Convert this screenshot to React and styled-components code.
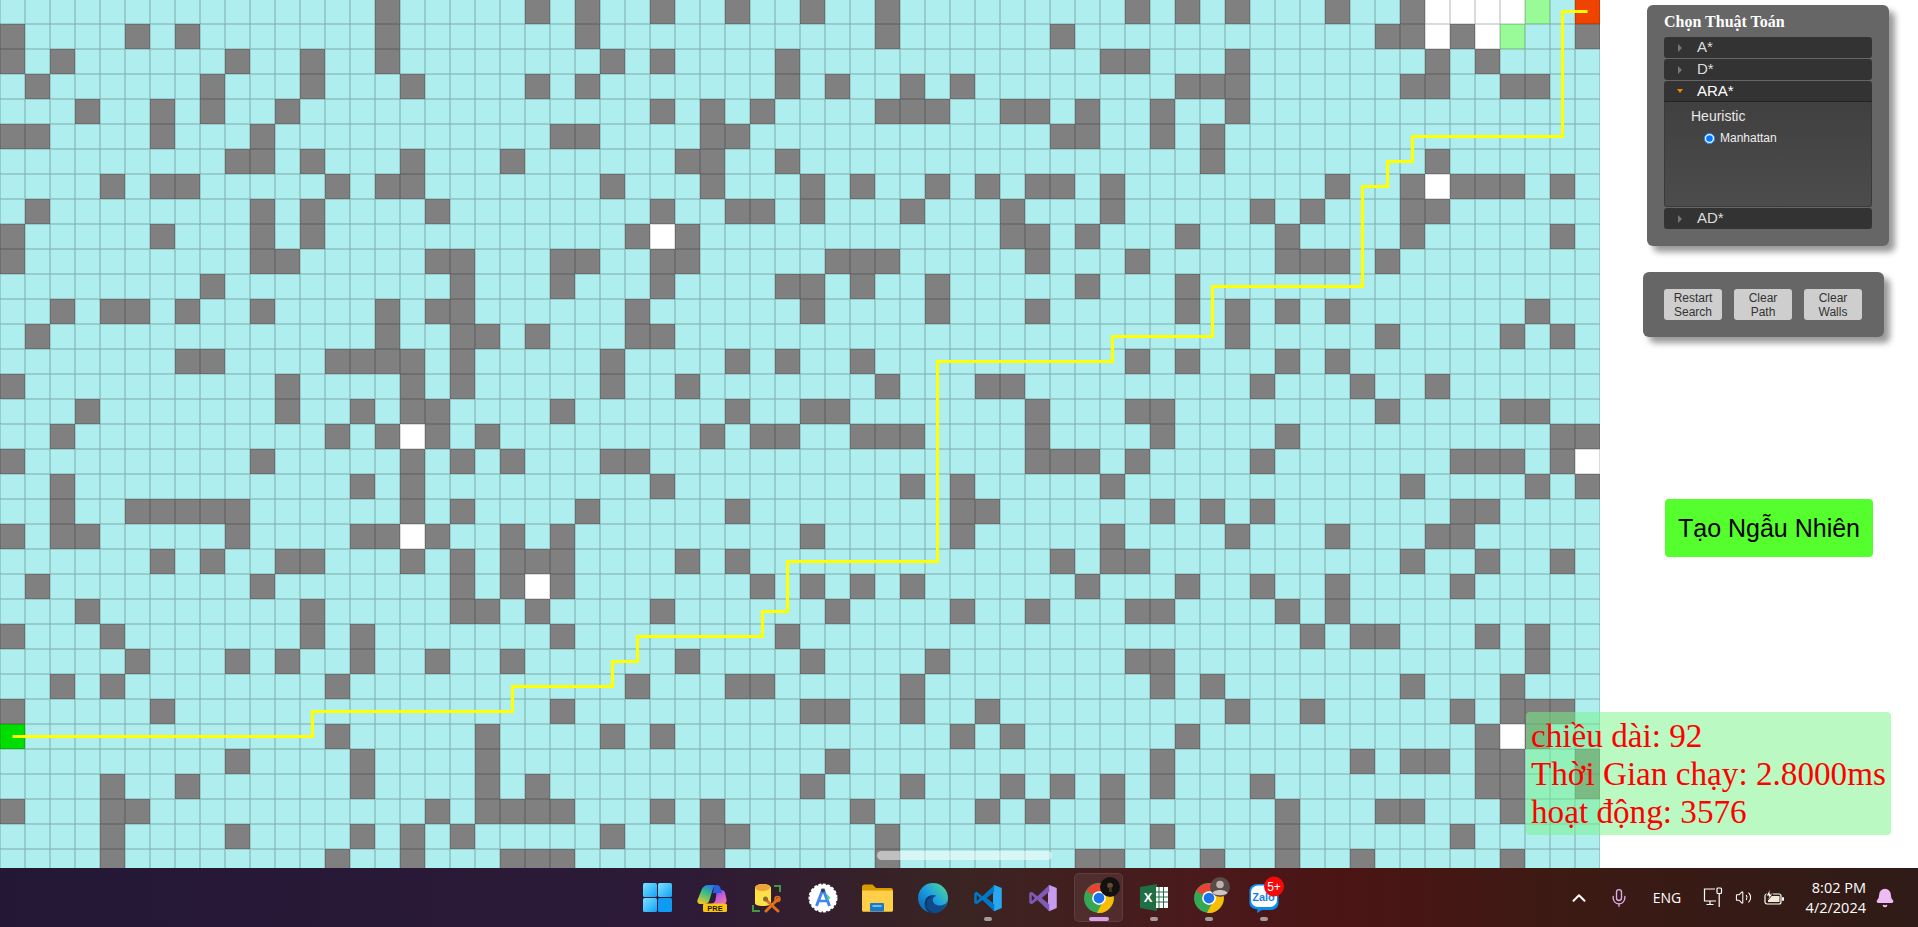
import React from 'react';
import styled, { createGlobalStyle } from 'styled-components';
import { ChevronUp, Mic, Volume2, Bell } from 'lucide-react';

const GlobalStyle = createGlobalStyle`
  html, body {
    margin: 0;
    padding: 0;
    background: #fff;
    overflow: hidden;
  }
`;

// wall columns per row, read off the screenshot
const WALLS = [
  [15,21,23,26,29,32,35,45,47,49,53,56],
  [0,5,7,15,23,35,42,55,56,58,63],
  [0,2,9,12,15,24,26,31,44,45,49,57,59],
  [1,8,12,16,21,23,31,33,36,38,47,48,49,56,57,60,61],
  [3,6,8,11,26,28,30,35,36,37,40,41,43,46,49],
  [0,1,6,10,22,23,28,29,42,43,46,48],
  [9,10,12,16,20,27,28,31,48,57],
  [4,6,7,13,15,16,24,28,32,34,37,39,41,42,44,53,56,58,59,60,62],
  [1,10,12,17,26,29,30,32,36,40,44,50,52,56,57],
  [0,6,10,12,25,27,40,41,43,47,51,56,62],
  [0,10,11,17,18,22,23,26,27,33,34,35,41,45,51,52,53,55],
  [8,18,22,26,31,32,34,37,43,47],
  [2,4,5,7,10,15,17,18,25,32,37,41,47,49,51,53,61],
  [1,15,18,19,21,25,26,49,55,60,62],
  [7,8,13,14,15,16,18,24,29,31,34,45,47,51,53],
  [0,11,16,18,24,27,35,39,40,50,54,57],
  [3,11,14,16,17,22,29,32,33,41,45,46,55,60,61],
  [2,13,15,17,19,28,30,31,34,35,36,41,46,51,62,63],
  [0,10,16,18,20,24,25,41,42,43,45,50,58,59,60,62],
  [2,14,16,26,36,38,44,56,61,63],
  [2,5,6,7,8,9,16,18,23,29,38,39,46,48,50,58,59],
  [0,2,3,9,14,15,17,20,22,32,38,44,49,53,57,58],
  [6,8,11,12,16,18,20,21,22,27,29,42,44,45,56,59,62],
  [1,10,18,20,22,30,32,34,36,43,47,50,53,58],
  [3,12,18,19,21,26,33,38,41,45,46,51,53],
  [0,4,12,14,22,31,52,54,55,59,61],
  [5,9,11,14,17,20,27,32,37,45,46,61],
  [2,4,13,25,29,30,36,46,48,56,60],
  [0,6,22,32,33,36,39,49,52,58,60,61,62],
  [13,19,24,26,38,40,47,59,61],
  [9,14,19,33,46,54,56,57,59,60,63],
  [4,7,14,19,21,32,36,40,42,44,46,50,59,60,63],
  [0,4,5,17,19,20,21,22,26,28,34,39,41,44,51,55,56,60],
  [4,9,14,16,18,24,28,29,35,46,51,58],
  [4,13,16,20,21,22,28,35,43,44,48,51,54,60],
];

const SPECIAL = {
  '0:57': 'open', '0:58': 'open', '0:59': 'open', '0:60': 'open',
  '1:57': 'open', '1:59': 'open',
  '7:57': 'open', '9:26': 'open', '17:16': 'open', '18:63': 'open',
  '21:16': 'open', '23:21': 'open', '29:60': 'open',
  '0:61': 'frontier', '1:60': 'frontier',
  '29:0': 'start', '0:63': 'end',
};

const COLS = 64;
const CELL = 25;

const CELL_COLORS = {
  closed: '#afeeee',
  wall: '#808080',
  open: '#ffffff',
  frontier: '#98fb98',
  start: '#00dd00',
  end: '#ee4400',
};

// [col, row] corners of the found path
const PATH = [
  [0,29],[12,29],[12,28],[20,28],[20,27],[24,27],[24,26],[25,26],[25,25],[30,25],[30,24],
  [31,24],[31,22],[37,22],[37,14],[44,14],[44,13],[48,13],[48,11],[54,11],[54,7],[55,7],
  [55,6],[56,6],[56,5],[62,5],[62,0],[63,0],
];

const pathPoints = PATH.map(([c, r]) => `${c * CELL + 12.5},${r * CELL + 12.5}`).join(' ');

const cellKind = (row, col) => {
  const special = SPECIAL[`${row}:${col}`];
  if (special) return special;
  return WALLS[row].includes(col) ? 'wall' : 'closed';
};

const Page = styled.div`
  position: relative;
  width: 1918px;
  height: 927px;
  display: flex;
  flex-direction: column;
  overflow: hidden;
  font-family: "Liberation Sans", Arial, sans-serif;
`;

const Main = styled.div`
  display: flex;
  height: 868px;
  overflow: hidden;
`;

const BoardFrame = styled.div`
  width: 1600px;
  flex: none;
  overflow: hidden;
`;

const Board = styled.div`
  position: relative;
  margin-top: -1px;
  display: grid;
  grid-template-columns: repeat(${COLS}, ${CELL}px);
  grid-auto-rows: ${CELL}px;
`;

const Cell = styled.div`
  background: ${(p) => CELL_COLORS[p.$kind]};
  box-shadow: inset 1px 1px 0 rgba(0, 0, 0, 0.14), inset -1px -1px 0 rgba(0, 0, 0, 0.14);
`;

const PathLine = styled.svg`
  position: absolute;
  left: 0;
  top: 0;
  width: 1600px;
  height: 875px;
  pointer-events: none;
`;

const Side = styled.aside`
  flex: 1;
  display: flex;
  flex-direction: column;
  align-items: flex-start;
`;

const AlgoPanel = styled.section`
  width: 242px;
  height: 241px;
  margin: 5px 0 0 47px;
  padding: 7px 17px 0;
  box-sizing: border-box;
  background: #666;
  border-radius: 6px;
  box-shadow: 6px 6px 6px rgba(0, 0, 0, 0.4);
`;

const PanelTitle = styled.h3`
  margin: 0;
  height: 25px;
  font-family: "Liberation Serif", "Times New Roman", serif;
  font-size: 16px;
  line-height: 20px;
  font-weight: bold;
  color: #fff;
`;

const Accordion = styled.div`
  display: flex;
  flex-direction: column;
  gap: 1px;
`;

const AlgoHeader = styled.div`
  height: 21px;
  box-sizing: border-box;
  display: flex;
  align-items: center;
  background: #333;
  border-radius: ${(p) => (p.$active ? '3px 3px 0 0' : '3px')};
  border-bottom: ${(p) => (p.$active ? '1px solid #222' : 'none')};
  font-size: 15px;
  color: ${(p) => (p.$active ? '#fff' : '#ddd')};
`;

const HeaderText = styled.span`
  padding-bottom: 2px;
`;

const ArrowSlot = styled.span`
  width: 33px;
  padding-left: 13px;
  box-sizing: border-box;
  display: flex;
  align-items: center;
`;

const ArrowRight = styled.span`
  width: 0;
  height: 0;
  margin-left: 1px;
  border-style: solid;
  border-width: 4px 0 4px 4px;
  border-color: transparent transparent transparent #777;
`;

const ArrowDown = styled.span`
  width: 0;
  height: 0;
  border-style: solid;
  border-width: 4px 3.5px 0;
  border-color: #f58400 transparent transparent;
`;

const AlgoBody = styled.div`
  height: 105px;
  margin-top: -1px;
  padding: 4px 0 0 26px;
  box-sizing: border-box;
  background: linear-gradient(180deg, #404040, #4c4c4c);
  border: 1px solid #3a3a3a;
  border-top: none;
  border-radius: 0 0 3px 3px;
`;

const BodyLabel = styled.div`
  font-size: 14px;
  line-height: 20px;
  color: #e8e8e8;
`;

const RadioRow = styled.label`
  display: flex;
  align-items: center;
  gap: 5px;
  margin: 5px 0 0 13px;
  font-size: 12px;
  line-height: 14px;
  color: #eee;
`;

const Radio = styled.input`
  width: 11px;
  height: 11px;
  margin: 0;
`;

const ButtonPanel = styled.section`
  width: 241px;
  height: 65px;
  margin: 26px 0 0 43px;
  padding: 17px 0 0 21px;
  box-sizing: border-box;
  display: flex;
  gap: 12px;
  background: #666;
  border-radius: 6px;
  box-shadow: 6px 6px 6px rgba(0, 0, 0, 0.4);
`;

const SmallButton = styled.button`
  width: 58px;
  height: 31px;
  padding: 0;
  border: none;
  border-radius: 3px;
  background: #cecece;
  color: #333;
  font-family: inherit;
  font-size: 12px;
  line-height: 14px;
`;

const RandomButton = styled.button`
  width: 208px;
  height: 58px;
  margin: 162px 0 0 65px;
  padding: 0;
  border: none;
  border-radius: 4px;
  background: #55ff2d;
  color: #000;
  font-family: inherit;
  font-size: 25px;
`;

const Stats = styled.div`
  position: absolute;
  left: 1526px;
  top: 712px;
  padding: 5px 5px 4px;
  border-radius: 4px;
  background: rgba(117, 243, 133, 0.5);
  color: #ff0000;
  font-family: "Liberation Serif", "Times New Roman", serif;
  font-size: 33.2px;
  white-space: nowrap;
`;

const ScrollThumb = styled.div`
  position: absolute;
  left: 877px;
  top: 851px;
  width: 175px;
  height: 9px;
  border-radius: 5px;
  background: rgba(255, 255, 255, 0.5);
`;

const Taskbar = styled.footer`
  height: 59px;
  flex: none;
  display: flex;
  align-items: center;
  padding-left: 629.5px;
  background: linear-gradient(90deg, #241736 0%, #2c1a38 35%, #3a2422 50%, #4a1a1c 62%, #4b1414 70%, #3c1a14 82%, #2f1b17 100%);
`;

const Tile = styled.div`
  position: relative;
  width: 49px;
  height: 49px;
  margin: 0 3.1px;
  display: flex;
  align-items: center;
  justify-content: center;
  box-sizing: border-box;
  border-radius: 5px;
  background: ${(p) => (p.$active ? 'rgba(255, 255, 255, 0.07)' : 'transparent')};
  border: 1px solid ${(p) => (p.$active ? 'rgba(255, 255, 255, 0.08)' : 'transparent')};
`;

const RunDot = styled.span`
  position: absolute;
  left: 50%;
  bottom: 0;
  width: ${(p) => (p.$active ? '20px' : '8px')};
  height: 4px;
  transform: translateX(-50%);
  border-radius: 2px;
  background: ${(p) => (p.$active ? '#dca0e6' : '#a59a9a')};
`;

const Tray = styled.div`
  margin-left: auto;
  padding-right: 14px;
  display: flex;
  align-items: center;
  color: #fff;
  font-family: "Open Sans", "Noto Sans", sans-serif;
`;

const TrayItem = styled.div`
  width: ${(p) => p.$w}px;
  display: flex;
  justify-content: center;
  align-items: center;
  font-size: 14px;
`;

const Clock = styled.div`
  width: 73px;
  text-align: right;
  font-size: 14.5px;
  line-height: 20px;
`;

const WindowsIcon = () => (
  <svg width="29" height="29" viewBox="0 0 29 29">
    <defs>
      <linearGradient id="winA" x1="0" y1="0" x2="1" y2="1">
        <stop offset="0" stopColor="#7be4ff" />
        <stop offset="1" stopColor="#12a0f5" />
      </linearGradient>
    </defs>
    <rect x="0" y="0" width="14" height="14" rx="1.5" fill="url(#winA)" />
    <rect x="15" y="0" width="14" height="14" rx="1.5" fill="url(#winA)" />
    <rect x="0" y="15" width="14" height="14" rx="1.5" fill="url(#winA)" />
    <rect x="15" y="15" width="14" height="14" rx="1.5" fill="#0f9bf2" />
  </svg>
);

const CopilotIcon = () => (
  <svg width="30" height="30" viewBox="0 0 30 30">
    <defs>
      <linearGradient id="copA" x1="0.7" y1="0" x2="0.2" y2="1">
        <stop offset="0" stopColor="#1f7be8" />
        <stop offset="0.5" stopColor="#47c27a" />
        <stop offset="1" stopColor="#f3c628" />
      </linearGradient>
      <linearGradient id="copB" x1="0.2" y1="0" x2="0.9" y2="1">
        <stop offset="0" stopColor="#2c5fe0" />
        <stop offset="0.45" stopColor="#c45ad8" />
        <stop offset="1" stopColor="#f07ab0" />
      </linearGradient>
    </defs>
    <path d="M21 7h3.500c1.800 0 3 1 3.500 2.500l1.500 7c.5 2.500-1 4.500-3.500 4.500H14c2.500-.5 4-2 4.500-4l1-7c.2-1.500.5-3 1.500-3z" fill="url(#copB)" />
    <path d="M11 2h9c-2.500.5-3.500 2-4.500 5l-3 10c-.7 2.500-2.500 4-4.500 4H3c-2 0-3-2-2.500-4l4-10C5.500 4 8 2 11 2z" fill="url(#copA)" />
    <path d="M17 2h3c2 0 3 1.500 3.500 3l1.500 5h-9l.5-3c.3-2 .5-4 .5-5z" fill="#2c5fe0" />
    <rect x="6" y="20.500" width="24" height="8.500" rx="1.500" fill="#f8c513" />
    <text x="18" y="27.500" textAnchor="middle" fontFamily="Liberation Sans, sans-serif" fontWeight="bold" fontSize="7.500" fill="#2a1a00">PRE</text>
  </svg>
);

const ToolIcon = () => (
  <svg width="30" height="30" viewBox="0 0 30 30">
    <path d="M3 5c0-2 3-4 8-4s8 2 8 4v15c0 2-3 3-8 3s-8-1-8-3z" fill="#fde047" />
    <ellipse cx="10.500" cy="4.500" rx="7.500" ry="3.500" fill="#eda33a" />
    <path d="M22 3h6v6M1 22v6h7" fill="none" stroke="#3f9a3f" strokeWidth="2" />
    <path d="M13 16l13 12M26 16L14 28" stroke="#e0701a" strokeWidth="3" strokeLinecap="round" />
    <circle cx="25.500" cy="16" r="2.500" fill="none" stroke="#e0701a" strokeWidth="1.500" />
    <circle cx="13.500" cy="16" r="2.500" fill="#8a6a3a" />
  </svg>
);

const AndroidStudioIcon = () => (
  <svg width="30" height="30" viewBox="0 0 30 30">
    <circle cx="15" cy="15" r="13.500" fill="#fff" stroke="#fff" strokeWidth="2" strokeDasharray="3 1.500" />
    <path d="M15 6l-6.500 17M15 6l6.500 17" fill="none" stroke="#4285f4" strokeWidth="3" />
    <path d="M10 18h10" stroke="#4285f4" strokeWidth="2.500" />
    <path d="M19 11l3.500 4-3 2z" fill="#3ddc84" />
    <circle cx="15" cy="7.500" r="2" fill="#30405a" />
  </svg>
);

const FolderIcon = () => (
  <svg width="31" height="28" viewBox="0 0 31 28">
    <path d="M0 3c0-1.500 1-2.500 2.500-2.500h8L14 4h15c1 0 2 1 2 2v4H0z" fill="#d99b00" />
    <path d="M0 6.500h29.500c.8 0 1.500.7 1.500 1.500v18c0 1-.7 1.800-1.500 1.800h-28C.7 27.800 0 27 0 26z" fill="#ffcf4a" />
    <rect x="8" y="19" width="14" height="8.500" rx="1" fill="#1e78c8" />
    <rect x="10.500" y="21" width="9" height="2" fill="#6cc0f0" />
  </svg>
);

const EdgeIcon = () => (
  <svg width="30" height="30" viewBox="0 0 30 30">
    <defs>
      <linearGradient id="edgeA" x1="0" y1="1" x2="1" y2="0">
        <stop offset="0" stopColor="#0c59a4" />
        <stop offset="0.5" stopColor="#1b9de2" />
        <stop offset="1" stopColor="#54e08c" />
      </linearGradient>
    </defs>
    <circle cx="15" cy="15" r="15" fill="url(#edgeA)" />
    <path d="M29.500 18c-1 3-5 5-9 4.500-4-.5-6.500-3.500-5.500-7 .5-1.500 2-2.500 3.500-2.500-3-2-9-1-10.500 4-1 4 1 10 7 13 6 1 12-4 14.500-12z" fill="#114a8b" />
    <path d="M14 30c-5-2-7.500-7-6-12 .8-2.700 3-4 5-4.500" fill="none" stroke="#0a3a70" strokeWidth="2" />
  </svg>
);

const VsCodeIcon = () => (
  <svg width="30" height="30" viewBox="0 0 24 24">
    <path d="M17 1.500L23 4v16l-6 2.500-1-1V2.500z" fill="#29a8f0" />
    <path d="M17 1.500L7.500 10.500 3 7 1 8v8l2 1 4.500-3.500L17 22.500V17l-6-5 6-5zM3 9.500L5.500 12 3 14.500z" fill="#0078c8" fillRule="evenodd" />
  </svg>
);

const VisualStudioIcon = () => (
  <svg width="30" height="30" viewBox="0 0 24 24">
    <path d="M17 1.500L23 4v16l-6 2.500-1-1V2.500z" fill="#c79bf0" />
    <path d="M17 1.500L7.500 10.500 3 7 1 8v8l2 1 4.500-3.500L17 22.500V17l-6-5 6-5zM3 9.500L5.500 12 3 14.500z" fill="#7f5ab6" fillRule="evenodd" />
  </svg>
);

const ChromeBase = ({ children }) => (
  <svg width="30" height="30" viewBox="0 0 30 30" overflow="visible">
    <g transform="scale(1.25)">
      <circle cx="12" cy="12" r="12" fill="#34a853" />
      <path d="M1.700 6.300A12 12 0 0 1 22.300 6.300H12a5.700 5.700 0 0 0-5 3z" fill="#ea4335" />
      <path d="M22.300 6.300A12 12 0 0 1 10.300 23.900L15 15a5.700 5.700 0 0 0-3-8.700z" fill="#fbbc04" />
      <circle cx="12" cy="12" r="5.500" fill="#fff" />
      <circle cx="12" cy="12" r="4.300" fill="#1a73e8" />
    </g>
    {children}
  </svg>
);

const ChromeProfileIcon = () => (
  <ChromeBase>
    <circle cx="26" cy="4" r="10" fill="#141210" />
    <circle cx="26" cy="2.500" r="2.800" fill="#6a4a30" />
    <rect x="25" y="4" width="2.800" height="5" fill="#4a3525" />
  </ChromeBase>
);

const ChromeGuestIcon = () => (
  <ChromeBase>
    <circle cx="26" cy="4" r="10" fill="#5a4a48" />
    <circle cx="26" cy="1.500" r="3.800" fill="#bdb2ae" />
    <path d="M18.500 10c1.500-4 13.500-4 15 0-2.500 3-12.500 3-15 0z" fill="#cfc6c2" />
  </ChromeBase>
);

const ExcelIcon = () => (
  <svg width="28" height="27" viewBox="0 0 28 27">
    <path d="M0 3l17-3v27L0 24z" fill="#1f6f43" />
    <rect x="16" y="3" width="12" height="21" fill="#fff" />
    <path d="M19 3v21M23.500 3v21M16 8h12M16 13h12M16 18h12" stroke="#1f6f43" strokeWidth="1" />
    <text x="8" y="18" textAnchor="middle" fontFamily="Liberation Sans, sans-serif" fontWeight="bold" fontSize="13" fill="#fff">X</text>
  </svg>
);

const ZaloIcon = () => (
  <svg width="30" height="30" viewBox="0 0 30 30" overflow="visible">
    <path d="M8 1h14c4 0 7.500 3 7.500 7v12c0 4-3.500 7-7.500 7H13l-5 3 .5-3.500C4 26 .5 24 .5 20V8c0-4 3.500-7 7.500-7z" fill="#0b8cf0" />
    <rect x="2" y="2.500" width="26" height="21.500" rx="7" fill="#fff" />
    <text x="14.500" y="18" textAnchor="middle" fontFamily="Liberation Sans, sans-serif" fontWeight="bold" fontSize="11" fill="#1a7fe8">Zalo</text>
    <circle cx="25" cy="3.500" r="10" fill="#f50a0a" />
    <text x="25" y="8" textAnchor="middle" fontFamily="Liberation Sans, sans-serif" fontSize="12" fill="#fff">5+</text>
  </svg>
);

const DeviceIcon = () => (
  <svg width="20" height="21" viewBox="0 0 20 21" fill="none" stroke="#fff" strokeWidth="1.200">
    <path d="M13 14H1.500V2H12" />
    <path d="M7 14v3M3.500 17.500h7" />
    <rect x="14" y="1" width="4.500" height="5.500" rx="1" />
    <path d="M16.200 6.500V20" />
  </svg>
);

const BatteryIcon = () => (
  <svg width="21" height="17" viewBox="0 0 21 17">
    <rect x="1" y="5" width="16" height="10" rx="2" fill="#2f1b17" stroke="#fff" strokeWidth="1.200" />
    <rect x="4" y="7" width="11.500" height="6" fill="#f2ead8" />
    <rect x="18" y="8" width="2" height="4" rx="1" fill="#fff" />
    <path d="M6 0L2 7h3L3 12l6-7H6z" fill="#fff" stroke="#3a1a15" strokeWidth="1" />
  </svg>
);

const APPS = [
  { id: 'start', Icon: WindowsIcon },
  { id: 'copilot', Icon: CopilotIcon },
  { id: 'tool', Icon: ToolIcon },
  { id: 'studio', Icon: AndroidStudioIcon },
  { id: 'folder', Icon: FolderIcon },
  { id: 'edge', Icon: EdgeIcon },
  { id: 'vscode', Icon: VsCodeIcon, running: true },
  { id: 'vs', Icon: VisualStudioIcon },
  { id: 'chrome', Icon: ChromeProfileIcon, running: true, active: true },
  { id: 'excel', Icon: ExcelIcon, running: true },
  { id: 'chrome2', Icon: ChromeGuestIcon, running: true },
  { id: 'zalo', Icon: ZaloIcon, running: true },
];

const ALGORITHMS = ['A*', 'D*', 'ARA*', 'AD*'];

const ACTIONS = [
  ['Restart', 'Search'],
  ['Clear', 'Path'],
  ['Clear', 'Walls'],
];

const cells = WALLS.flatMap((_, row) =>
  Array.from({ length: COLS }, (_, col) => <Cell key={`${row}-${col}`} $kind={cellKind(row, col)} />)
);

const App = () => {
  return (
    <Page>
      <GlobalStyle />
      <Main>
        <BoardFrame>
          <Board>
            {cells}
            <PathLine viewBox="0 0 1600 875">
              <polyline points={pathPoints} fill="none" stroke="#ffff00" strokeWidth="3" />
            </PathLine>
          </Board>
        </BoardFrame>
        <Side>
          <AlgoPanel>
            <PanelTitle>Chọn Thuật Toán</PanelTitle>
            <Accordion>
              {ALGORITHMS.map((name) => {
                const active = name === 'ARA*';
                return (
                  <React.Fragment key={name}>
                    <AlgoHeader $active={active}>
                      <ArrowSlot>{active ? <ArrowDown /> : <ArrowRight />}</ArrowSlot>
                      <HeaderText>{name}</HeaderText>
                    </AlgoHeader>
                    {active && (
                      <AlgoBody>
                        <BodyLabel>Heuristic</BodyLabel>
                        <RadioRow>
                          <Radio type="radio" checked readOnly />
                          Manhattan
                        </RadioRow>
                      </AlgoBody>
                    )}
                  </React.Fragment>
                );
              })}
            </Accordion>
          </AlgoPanel>
          <ButtonPanel>
            {ACTIONS.map(([top, bottom]) => (
              <SmallButton key={top + bottom}>
                {top}
                <br />
                {bottom}
              </SmallButton>
            ))}
          </ButtonPanel>
          <RandomButton>Tạo Ngẫu Nhiên</RandomButton>
        </Side>
      </Main>
      <Stats>
        chiều dài: 92
        <br />
        Thời Gian chạy: 2.8000ms
        <br />
        hoạt động: 3576
      </Stats>
      <ScrollThumb />
      <Taskbar>
        {APPS.map(({ id, Icon, running, active }) => (
          <Tile key={id} $active={active}>
            <Icon />
            {running && <RunDot $active={active} />}
          </Tile>
        ))}
        <Tray>
          <TrayItem $w={40}><ChevronUp size={22} strokeWidth={2.2} /></TrayItem>
          <TrayItem $w={40}><Mic size={20} color="#dcb0ea" strokeWidth={1.6} /></TrayItem>
          <TrayItem $w={56}>ENG</TrayItem>
          <TrayItem $w={36}><DeviceIcon /></TrayItem>
          <TrayItem $w={24}><Volume2 size={17} strokeWidth={1.5} /></TrayItem>
          <TrayItem $w={38}><BatteryIcon /></TrayItem>
          <Clock>
            8:02 PM
            <br />
            4/2/2024
          </Clock>
          <TrayItem $w={38}><Bell size={20} color="#eebcf5" fill="#eebcf5" /></TrayItem>
        </Tray>
      </Taskbar>
    </Page>
  );
};

export default App;
